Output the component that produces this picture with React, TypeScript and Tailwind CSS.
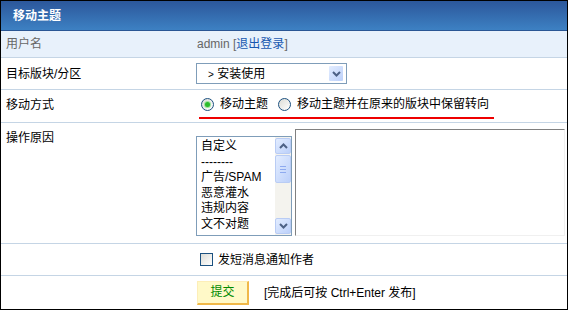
import React from "react";

const reasons = ["自定义", "--------", "广告/SPAM", "恶意灌水", "违规内容", "文不对题"];

function Chevron({ up = false }: { up?: boolean }) {
  return (
    <svg width="9" height="6" viewBox="0 0 9 6" className={up ? "rotate-180" : ""}>
      <path d="M1 1 L4.5 4.5 L8 1" fill="none" stroke="#4d6185" strokeWidth="2" />
    </svg>
  );
}

function XpButton({ children, className = "" }: { children?: React.ReactNode; className?: string }) {
  return (
    <div
      className={`flex items-center justify-center rounded-[2px] border border-[#b9ccf4] bg-gradient-to-br from-[#e3edff] to-[#bcd0fa] ${className}`}
    >
      {children}
    </div>
  );
}

function Radio({ checked }: { checked?: boolean }) {
  return (
    <span className="flex h-[13px] w-[13px] items-center justify-center rounded-full border border-[#1c5180] bg-gradient-to-br from-[#dcdcd6] to-white">
      {checked && <span className="h-[5px] w-[5px] rounded-full bg-[#2bbb2b] shadow-[0_0_0_1px_#9ee39e]" />}
    </span>
  );
}

export default function App() {
  return (
    <div
      className="h-[310px] w-[568px] border border-black bg-white text-[12px] text-black"
      style={{ fontFamily: '"Liberation Sans", "Noto Sans CJK SC", sans-serif' }}
    >
      {/* header */}
      <div className="flex h-[30px] items-center border-b border-[#2a5694] bg-gradient-to-b from-[#2c579b] to-[#3d81c3] pl-[12px] font-bold text-white">
        移动主题
      </div>

      {/* 用户名 */}
      <div className="flex h-[27px] items-center border-b border-[#c5d5e5] bg-[#e8f1fb] text-[#666]">
        <div className="w-[191px] pl-[5px]">用户名</div>
        <div className="pl-[5px]">
          admin [<span className="text-[#1858b0]">退出登录</span>]
        </div>
      </div>

      {/* 目标版块 */}
      <div className="flex h-[32px] items-center border-b border-[#c5d5e5]">
        <div className="w-[191px] pl-[5px]">目标版块/分区</div>
        <div className="pl-[4px]">
          <div className="flex h-[21px] w-[151px] items-center justify-between border border-[#7f9db9] pl-[11px] pr-[2px]">
            <span>
              <span className="text-[10px]">&gt;</span> 安装使用
            </span>
            <XpButton className="h-[17px] w-[16px] border-white">
              <Chevron />
            </XpButton>
          </div>
        </div>
      </div>

      {/* 移动方式 */}
      <div className="flex h-[33px] items-start border-b border-[#c5d5e5]">
        <div className="w-[191px] pl-[5px] pt-[8px] leading-[14px]">移动方式</div>
        <div className="ml-[7px] mt-[8px] border-b-2 border-[#ee0000] pb-[6px] pl-[2px] pr-[5px]">
          <div className="flex h-[13px] items-center leading-[13px]">
            <Radio checked />
            <span className="ml-[6px]">移动主题</span>
            <span className="ml-[10px]">
              <Radio />
            </span>
            <span className="ml-[6px]">移动主题并在原来的版块中保留转向</span>
          </div>
        </div>
      </div>

      {/* 操作原因 */}
      <div className="flex h-[121px] border-b border-[#c5d5e5]">
        <div className="w-[191px] pl-[5px] pt-[8px] leading-[14px]">操作原因</div>
        <div className="flex items-end pb-[7px] pl-[4px] pt-[6px]">
          <div className="flex h-[100px] w-[96px] border border-[#7f9db9]">
            <div className="flex-1 overflow-hidden pl-[4px] pt-[2px] leading-[15.6px]">
              {reasons.map((r) => (
                <div key={r} className="whitespace-nowrap">
                  {r}
                </div>
              ))}
            </div>
            <div className="flex w-[16px] flex-col justify-between bg-[#f4f3ee] py-[1px]">
              <div className="flex flex-col gap-[1px]">
                <XpButton className="h-[16px]">
                  <Chevron up />
                </XpButton>
                <XpButton className="h-[28px] flex-col gap-[2px]">
                  <span className="h-px w-[6px] bg-[#8eaaf0]" />
                  <span className="h-px w-[6px] bg-[#8eaaf0]" />
                  <span className="h-px w-[6px] bg-[#8eaaf0]" />
                </XpButton>
              </div>
              <XpButton className="h-[16px]">
                <Chevron />
              </XpButton>
            </div>
          </div>
          <div className="ml-[3px] h-[107px] w-[270px] border border-b-[#f0f0f0] border-l-[#808080] border-r-[#f0f0f0] border-t-[#808080]" />
        </div>
      </div>

      {/* 通知 */}
      <div className="flex h-[32px] items-center border-b border-[#c5d5e5]">
        <div className="w-[191px]" />
        <div className="flex items-center pl-[8px]">
          <span className="h-[13px] w-[13px] border border-[#1c5180] bg-gradient-to-br from-[#dcdcd6] to-white" />
          <span className="ml-[5px]">发短消息通知作者</span>
        </div>
      </div>

      {/* 提交 */}
      <div className="flex h-[33px] items-center">
        <div className="w-[191px]" />
        <div className="flex items-center pl-[5px]">
          <div className="flex h-[24px] w-[52px] items-center justify-center border-b-2 border-l border-r-2 border-t border-b-[#f0b849] border-l-[#fdeeb8] border-r-[#f0b849] border-t-[#fdeeb8] bg-[#fff9c8] text-[#008a00]">
            提交
          </div>
          <span className="ml-[15px]">[完成后可按 Ctrl+Enter 发布]</span>
        </div>
      </div>
    </div>
  );
}
